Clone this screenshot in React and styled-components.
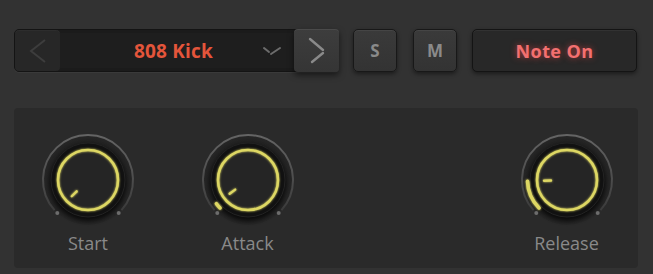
import React from "react";
import styled, { createGlobalStyle } from "styled-components";

const GlobalStyle = createGlobalStyle`
  html, body {
    margin: 0;
    padding: 0;
    background: #323232;
  }
  body {
    font-family: "Open Sans", "Liberation Sans", sans-serif;
    width: 653px;
    height: 274px;
    overflow: hidden;
  }
`;

const knobs = [
  { label: "Start", value: 0, col: 1 },
  { label: "Attack", value: 0.03, col: 2 },
  { label: "Release", value: 0.16, col: 4 },
];

// angle in degrees, clockwise from 12 o'clock
const pt = (r, deg) => {
  const a = (deg * Math.PI) / 180;
  return [r * Math.sin(a), -r * Math.cos(a)];
};

const arc = (r, from, to) => {
  const [x1, y1] = pt(r, from);
  const [x2, y2] = pt(r, to);
  const large = to - from > 180 ? 1 : 0;
  return `M ${x1} ${y1} A ${r} ${r} 0 ${large} 1 ${x2} ${y2}`;
};

function Knob({ label, value, col }) {
  const angle = 225 + value * 270;
  const [px1, py1] = pt(16, angle);
  const [px2, py2] = pt(23, angle);
  const [dl1, dl2] = pt(45, 223);
  const [dr1, dr2] = pt(45, 137);
  return (
    <KnobCell $col={col}>
      <svg width="100" height="100" viewBox="-50 -50 100 100">
        <defs>
          <linearGradient id="track" x1="0" y1="0" x2="0" y2="1">
            <stop offset="0" stopColor="#646464" />
            <stop offset="1" stopColor="#3c3c3c" />
          </linearGradient>
          <radialGradient id="well" cx="0.5" cy="0.5" r="0.5">
            <stop offset="0.8" stopColor="#1f1f1f" />
            <stop offset="1" stopColor="#272727" />
          </radialGradient>
          <filter id="soft" x="-30%" y="-30%" width="160%" height="160%">
            <feGaussianBlur stdDeviation="2.5" />
          </filter>
          <filter id="glow" x="-30%" y="-30%" width="160%" height="160%">
            <feGaussianBlur stdDeviation="0.8" result="b" />
            <feMerge>
              <feMergeNode in="b" />
              <feMergeNode in="SourceGraphic" />
            </feMerge>
          </filter>
        </defs>
        <circle r="45" fill="url(#well)" />
        <path d={arc(45, 228, 492)} fill="none" stroke="url(#track)" strokeWidth="2" />
        <circle cx={dl1} cy={dl2} r="2" fill="#6e6e6e" />
        <circle cx={dr1} cy={dr2} r="2" fill="#6e6e6e" />
        <circle cy="3" r="38" fill="#000" opacity="0.7" filter="url(#soft)" />
        <circle r="37" fill="#111111" stroke="#232323" strokeWidth="1" />
        <circle r="30" fill="#252525" />
        <g filter="url(#glow)">
          <circle r="30" fill="none" stroke="#ddd764" strokeWidth="2.6" />
          {value > 0 && (
            <path
              d={arc(39.5, 225, angle)}
              fill="none"
              stroke="#ddd764"
              strokeWidth="3.6"
              strokeLinecap="round"
            />
          )}
          <line
            x1={px1}
            y1={py1}
            x2={px2}
            y2={py2}
            stroke="#ddd764"
            strokeWidth="2.4"
            strokeLinecap="round"
          />
        </g>
      </svg>
      <KnobLabel>{label}</KnobLabel>
    </KnobCell>
  );
}

export default function App() {
  return (
    <>
      <GlobalStyle />
      <Screen>
        <TopRow>
          <PresetBar>
            <NavButton aria-label="previous">
              <svg width="20" height="26" viewBox="0 0 20 26">
                <path d="M17 2 L3 13 L17 24" fill="none" stroke="#3d3d3d" strokeWidth="2" />
              </svg>
            </NavButton>
            <PresetDisplay>
              <PresetName>808 Kick</PresetName>
              <svg width="20" height="10" viewBox="0 0 20 10">
                <path d="M2 2 L7 6" stroke="#6c6c6c" strokeWidth="2" strokeLinecap="round" />
                <path d="M9 8 L18 2" stroke="#6c6c6c" strokeWidth="2" strokeLinecap="round" />
              </svg>
            </PresetDisplay>
            <NavButton $raised aria-label="next">
              <svg width="20" height="28" viewBox="0 0 20 28">
                <path d="M3 2 L16 13" stroke="#8a8a8a" strokeWidth="2.4" strokeLinecap="round" />
                <path d="M16 16 L5 25" stroke="#8a8a8a" strokeWidth="2.4" strokeLinecap="round" />
              </svg>
            </NavButton>
          </PresetBar>
          <ToggleButton>S</ToggleButton>
          <ToggleButton>M</ToggleButton>
          <NoteButton>Note On</NoteButton>
        </TopRow>
        <Panel>
          {knobs.map((k) => (
            <Knob key={k.label} {...k} />
          ))}
        </Panel>
      </Screen>
    </>
  );
}

const Screen = styled.div`
  padding: 29px 0 0 14px;
  display: flex;
  flex-direction: column;
`;

const TopRow = styled.div`
  display: flex;
  align-items: center;
  height: 43px;
`;

const PresetBar = styled.div`
  width: 325px;
  height: 43px;
  display: flex;
  box-sizing: border-box;
  border-radius: 5px;
  background: #1b1b1b;
  border: 1px solid #141414;
  box-shadow: 0 1px 0 rgba(255, 255, 255, 0.04);
`;

const NavButton = styled.div`
  width: 45px;
  flex: none;
  display: flex;
  align-items: center;
  justify-content: center;
  border-radius: 4px;
  background: ${(p) =>
    p.$raised ? "linear-gradient(#3d3d3d, #353535)" : "#272727"};
  box-shadow: ${(p) =>
    p.$raised
      ? "0 3px 6px rgba(0,0,0,0.55), inset 0 1px 0 rgba(255,255,255,0.07)"
      : "inset 0 1px 0 rgba(255,255,255,0.03)"};
  margin: ${(p) => (p.$raised ? "-1px -1px -1px 0" : "0")};
`;

const PresetDisplay = styled.div`
  flex: 1;
  display: flex;
  align-items: center;
  padding: 0 12px 0 25px;
  margin: 3px 0;
  background: #1e1e1e;
`;

const PresetName = styled.span`
  flex: 1;
  text-align: center;
  color: #e4553b;
  font-size: 19px;
  font-weight: 700;
  letter-spacing: 0.2px;
`;

const ToggleButton = styled.div`
  width: 44px;
  height: 43px;
  box-sizing: border-box;
  margin-left: 14px;
  display: flex;
  align-items: center;
  justify-content: center;
  border-radius: 5px;
  border: 1px solid #181818;
  background: linear-gradient(#3a3a3a, #333333);
  box-shadow: 0 2px 4px rgba(0, 0, 0, 0.45), inset 0 1px 0 rgba(255, 255, 255, 0.06);
  color: #8a8a8a;
  font-size: 17px;
  font-weight: 700;
  & + & {
    margin-left: 16px;
  }
`;

const NoteButton = styled.div`
  width: 165px;
  height: 43px;
  box-sizing: border-box;
  margin-left: 15px;
  display: flex;
  align-items: center;
  justify-content: center;
  border-radius: 5px;
  border: 1px solid #141414;
  background: #282828;
  box-shadow: 0 2px 4px rgba(0, 0, 0, 0.45), inset 0 1px 0 rgba(255, 255, 255, 0.05);
  color: #f27070;
  font-size: 18px;
  font-weight: 700;
  letter-spacing: 0.4px;
  text-shadow: 0 0 6px rgba(255, 70, 70, 0.6);
`;

const Panel = styled.div`
  margin-top: 36px;
  width: 624px;
  height: 160px;
  box-sizing: border-box;
  padding: 22px 0 0 24px;
  border-radius: 4px;
  background: #2a2a2a;
  display: grid;
  grid-template-columns: repeat(4, 100px);
  column-gap: 59.5px;
  align-items: start;
`;

const KnobCell = styled.div`
  grid-column: ${(p) => p.$col};
  grid-row: 1;
  display: flex;
  flex-direction: column;
  align-items: center;
`;

const KnobLabel = styled.div`
  margin-top: 2px;
  color: #898989;
  font-size: 18px;
  line-height: 22px;
`;
